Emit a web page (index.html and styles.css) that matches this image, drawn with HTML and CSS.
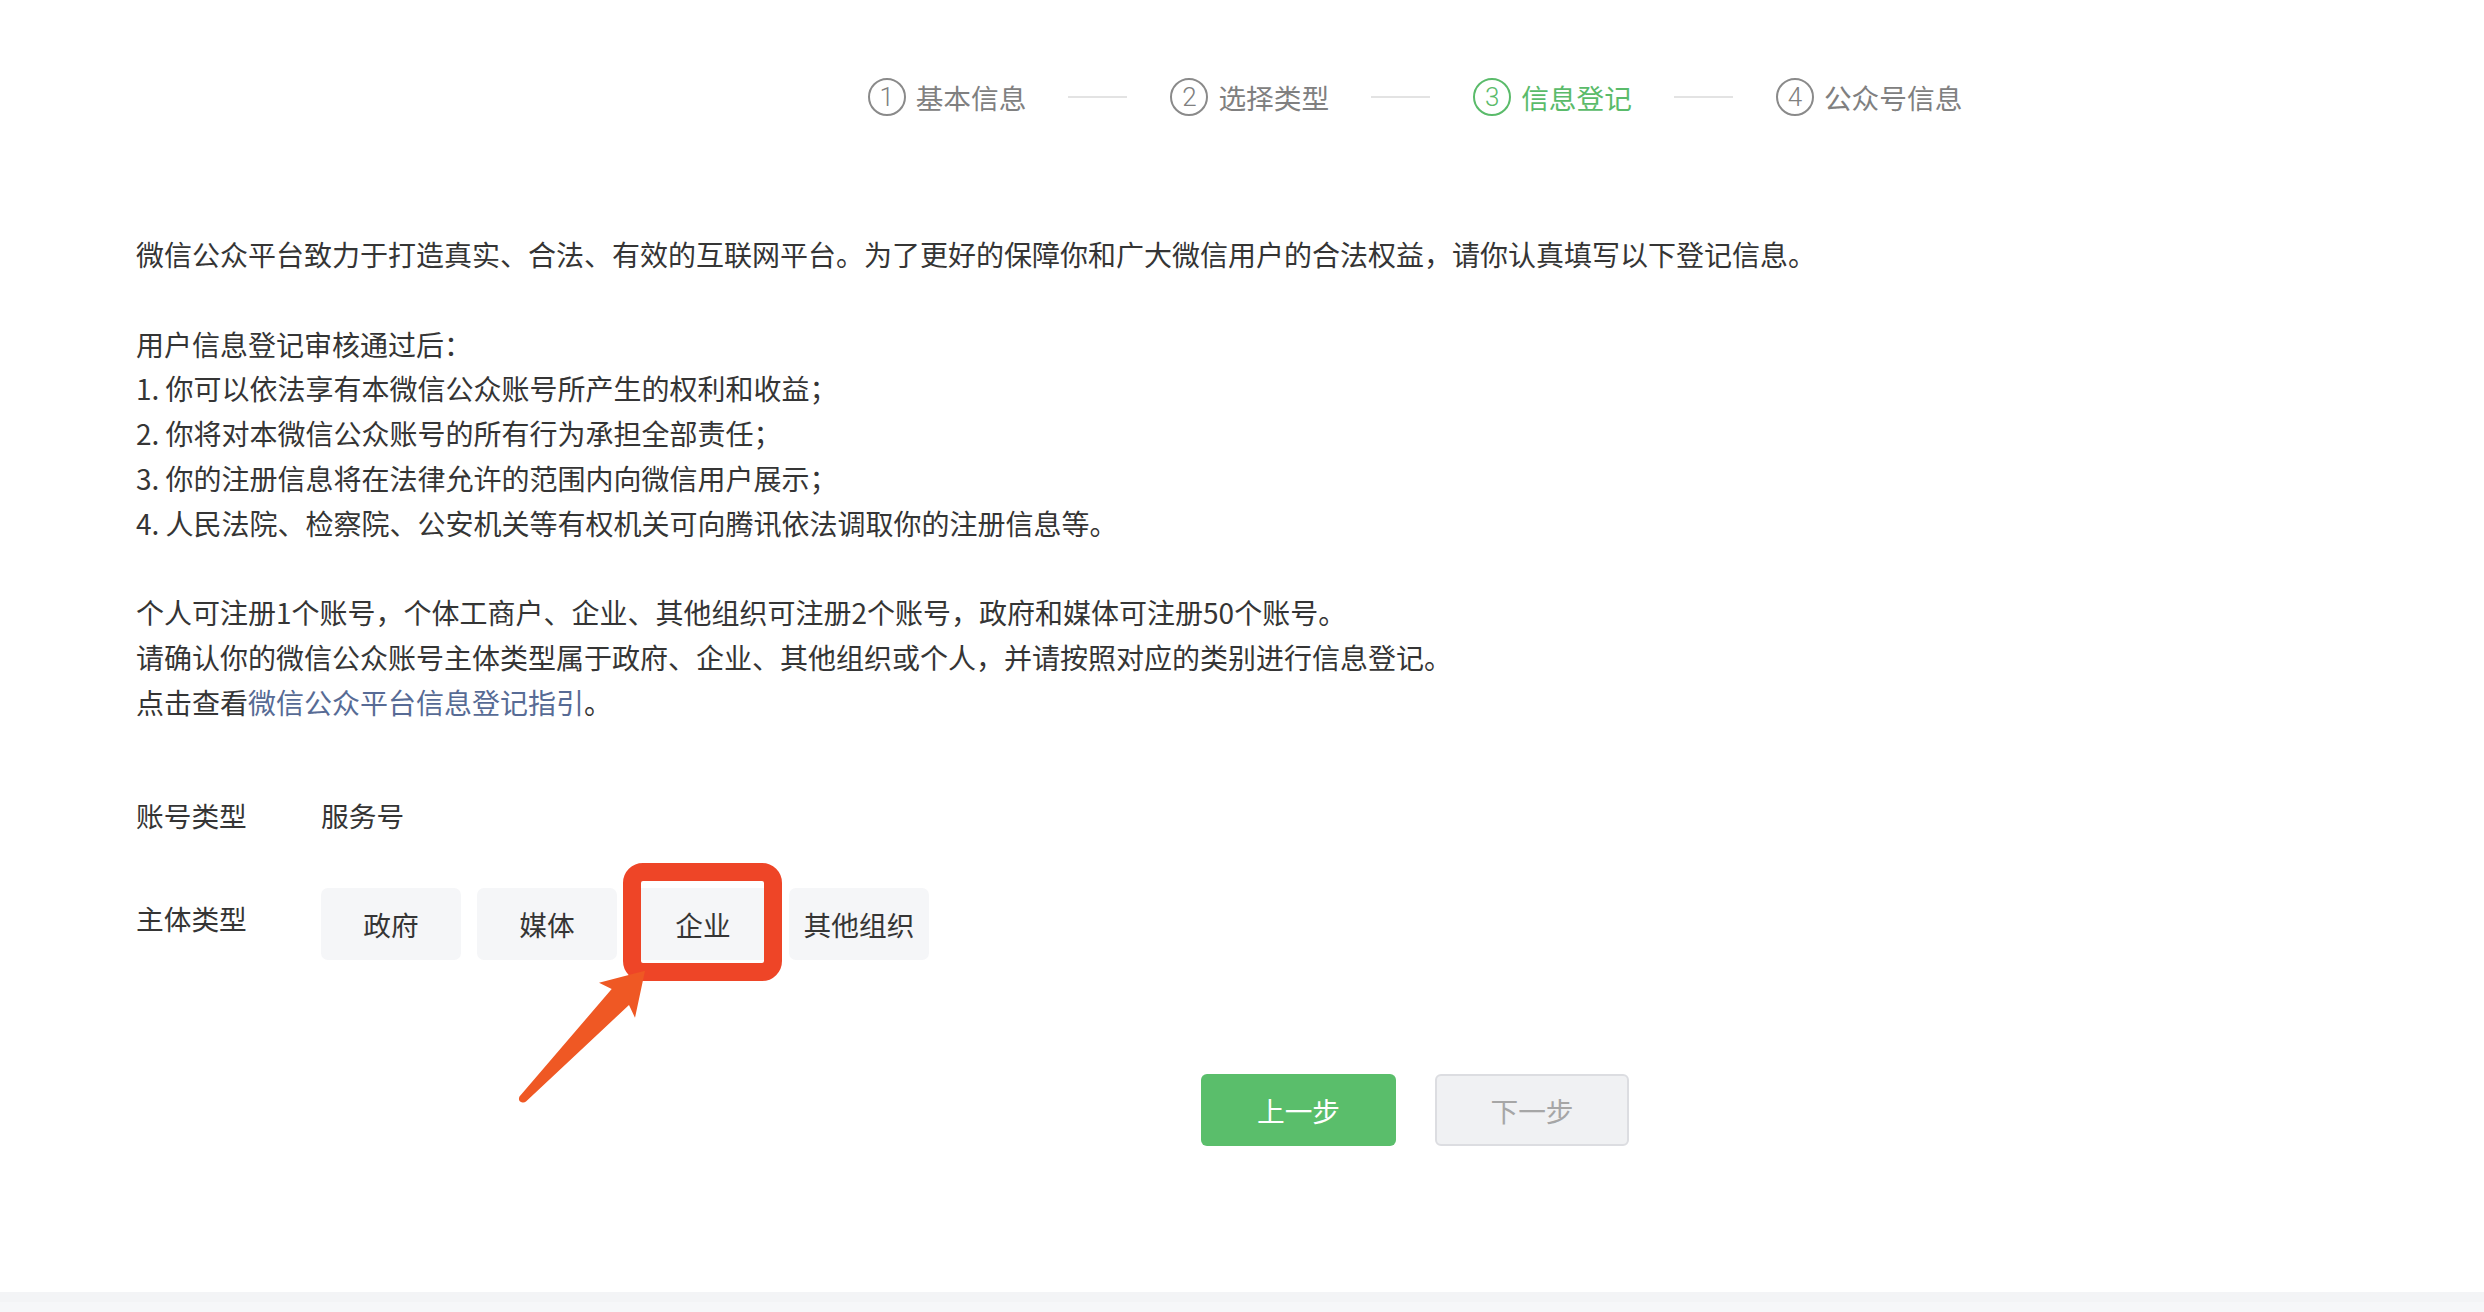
FILE: index.html
```html
<!DOCTYPE html>
<html lang="zh-CN">
<head>
<meta charset="utf-8">
<title>信息登记</title>
<link rel="stylesheet" href="styles.css">
</head>
<body>
<div class="page">
  <div class="steps">
    <div class="step"><span class="num">1</span><span class="label">基本信息</span></div>
    <span class="sep"></span>
    <div class="step"><span class="num">2</span><span class="label">选择类型</span></div>
    <span class="sep"></span>
    <div class="step active"><span class="num">3</span><span class="label">信息登记</span></div>
    <span class="sep"></span>
    <div class="step"><span class="num">4</span><span class="label">公众号信息</span></div>
  </div>

  <div class="intro">
    <p>微信公众平台致力于打造真实、合法、有效的互联网平台。为了更好的保障你和广大微信用户的合法权益，请你认真填写以下登记信息。</p>
    <p>用户信息登记审核通过后：<br>1. 你可以依法享有本微信公众账号所产生的权利和收益；<br>2. 你将对本微信公众账号的所有行为承担全部责任；<br>3. 你的注册信息将在法律允许的范围内向微信用户展示；<br>4. 人民法院、检察院、公安机关等有权机关可向腾讯依法调取你的注册信息等。</p>
    <p>个人可注册1个账号，个体工商户、企业、其他组织可注册2个账号，政府和媒体可注册50个账号。<br>请确认你的微信公众账号主体类型属于政府、企业、其他组织或个人，并请按照对应的类别进行信息登记。<br>点击查看<a class="link" href="#">微信公众平台信息登记指引</a>。</p>
  </div>

  <div class="form">
    <div class="row">
      <span class="row-label">账号类型</span>
      <span class="row-value">服务号</span>
    </div>
    <div class="row row-options">
      <span class="row-label opt-label">主体类型</span>
      <div class="options">
        <button class="opt">政府</button>
        <button class="opt">媒体</button>
        <button class="opt opt-marked">企业
          <span class="highlight"></span>
          <svg class="arrow" viewBox="500 950 170 170" width="170" height="170" aria-hidden="true">
            <path d="M645 970.7 L599 982.7 L611.7 989 L519.5 1096.5 Q517.5 1101.5 522.5 1102.5 Q524.5 1102.8 526 1101.5 L629 1005 L635 1017.7 Z" fill="#ef5824"/>
          </svg>
        </button>
        <button class="opt">其他组织</button>
      </div>
    </div>
  </div>

  <div class="actions">
    <button class="btn btn-primary">上一步</button>
    <button class="btn btn-disabled">下一步</button>
  </div>
</div>
<div class="footer"></div>
</body>
</html>
```

FILE: styles.css
```css
html, body {
  margin: 0;
  padding: 0;
  overflow: hidden;
  background: #ffffff;
}

body {
  font-family: "Noto Sans CJK SC", "Noto Sans", sans-serif;
  color: #353535;
  font-size: 27.7px;
}

.page {
  padding-top: 78px;
  padding-left: 136px;
}

/* steps */
.steps {
  display: flex;
  align-items: center;
  justify-content: center;
  height: 38px;
  margin-left: 210px;
}

.step {
  display: flex;
  align-items: center;
  color: #808080;
}

.num {
  box-sizing: border-box;
  width: 38px;
  height: 38px;
  border: 2px solid #8a8a8a;
  border-radius: 50%;
  display: flex;
  align-items: center;
  justify-content: center;
  font-family: Roboto, "Liberation Sans", sans-serif;
  font-weight: 300;
  font-size: 26px;
  line-height: 1;
  margin-right: 10px;
}

.label {
  font-size: 27.7px;
  line-height: 38px;
  white-space: nowrap;
}

.step.active {
  color: #5abb6a;
}

.step.active .num {
  border-color: #5abb6a;
}

.sep {
  width: 59px;
  height: 2px;
  background: #e3e3e3;
  margin: 0 43px 0 42px;
}

/* intro */
.intro {
  margin-top: 116px;
  font-size: 28px;
}

.intro p {
  margin: 0 0 44.8px;
  line-height: 44.8px;
  white-space: nowrap;
}

.link {
  color: #576b95;
  text-decoration: none;
}

/* form (its top margin collapses with the last paragraph's margin) */
.form {
  margin-top: 67.8px;
}

.row {
  display: flex;
  align-items: flex-start;
  line-height: 44.8px;
}

.row-label {
  width: 185px;
  flex: none;
}

.row-options {
  margin-top: 50.6px;
}

.opt-label {
  padding-top: 7.6px;
}

.options {
  display: flex;
  gap: 16px;
}

.opt {
  position: relative;
  width: 140px;
  height: 72px;
  border: 0;
  border-radius: 7px;
  background: #f5f6f8;
  color: #353535;
  font-family: inherit;
  font-size: 27.7px;
  padding: 0;
  cursor: pointer;
}

.highlight {
  position: absolute;
  left: -10px;
  top: -25px;
  width: 159px;
  height: 118px;
  box-sizing: border-box;
  border: 18px solid #ee4527;
  border-radius: 20px;
  pointer-events: none;
}

.arrow {
  position: absolute;
  left: -133px;
  top: 62px;
  pointer-events: none;
}

/* actions */
.actions {
  display: flex;
  justify-content: center;
  gap: 39px;
  margin-top: 114px;
  margin-left: 210px;
}

.btn {
  box-sizing: border-box;
  width: 195px;
  height: 72px;
  border-radius: 6px;
  font-family: inherit;
  font-size: 27.7px;
  padding: 0;
  cursor: pointer;
}

.btn-primary {
  background: #5abe6b;
  border: 0;
  color: #ffffff;
}

.btn-disabled {
  width: 194px;
  background: #f0f1f3;
  border: 2px solid #dcdde1;
  color: #a6a6a6;
}

/* footer */
.footer {
  margin-top: 146px;
  height: 20px;
  background: linear-gradient(#f3f4f6 0 50%, #f6f7f9 50% 100%);
}
```
